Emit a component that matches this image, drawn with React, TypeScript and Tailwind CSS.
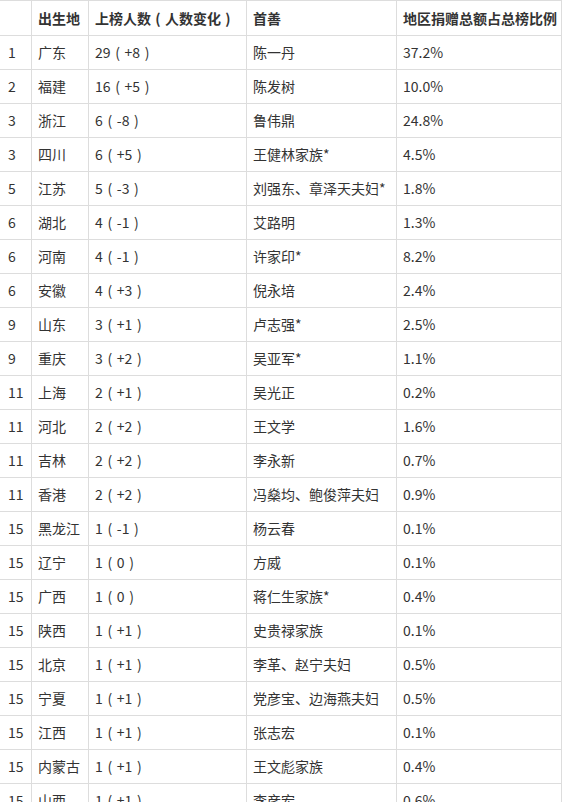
const rows: [string, string, string, string, string][] = [
  ['1', '广东', '29（+8）', '陈一丹', '37.2%'],
  ['2', '福建', '16（+5）', '陈发树', '10.0%'],
  ['3', '浙江', '6（-8）', '鲁伟鼎', '24.8%'],
  ['3', '四川', '6（+5）', '王健林家族*', '4.5%'],
  ['5', '江苏', '5（-3）', '刘强东、章泽天夫妇*', '1.8%'],
  ['6', '湖北', '4（-1）', '艾路明', '1.3%'],
  ['6', '河南', '4（-1）', '许家印*', '8.2%'],
  ['6', '安徽', '4（+3）', '倪永培', '2.4%'],
  ['9', '山东', '3（+1）', '卢志强*', '2.5%'],
  ['9', '重庆', '3（+2）', '吴亚军*', '1.1%'],
  ['11', '上海', '2（+1）', '吴光正', '0.2%'],
  ['11', '河北', '2（+2）', '王文学', '1.6%'],
  ['11', '吉林', '2（+2）', '李永新', '0.7%'],
  ['11', '香港', '2（+2）', '冯燊均、鲍俊萍夫妇', '0.9%'],
  ['15', '黑龙江', '1（-1）', '杨云春', '0.1%'],
  ['15', '辽宁', '1（0）', '方威', '0.1%'],
  ['15', '广西', '1（0）', '蒋仁生家族*', '0.4%'],
  ['15', '陕西', '1（+1）', '史贵禄家族', '0.1%'],
  ['15', '北京', '1（+1）', '李革、赵宁夫妇', '0.5%'],
  ['15', '宁夏', '1（+1）', '党彦宝、边海燕夫妇', '0.5%'],
  ['15', '江西', '1（+1）', '张志宏', '0.1%'],
  ['15', '内蒙古', '1（+1）', '王文彪家族', '0.4%'],
  ['15', '山西', '1（+1）', '李彦宏', '0.6%'],
];

// 列幅（右罫線込み）
const cols = ['w-[32px] pl-[8px]', 'w-[57px] pl-[6px]', 'w-[158px] pl-[6px]', 'w-[150px] pl-[6px]', 'w-[165px] pl-[6px]'];

// 全角括弧を枠の中央に置く
function Text({ s }: { s: string }) {
  const parts = s.split(/([（）])/);
  return (
    <>
      {parts.map((p, i) =>
        p === '（' || p === '）' ? (
          <span key={i} className="inline-block w-[14px] text-center">
            {p === '（' ? '(' : ')'}
          </span>
        ) : (
          <span key={i}>{p}</span>
        )
      )}
    </>
  );
}

function Row({ cells, head }: { cells: string[]; head?: boolean }) {
  return (
    <div className={`flex border-b border-[#dddddd] ${head ? 'h-[35px]' : 'h-[34px]'}`}>
      {cells.map((c, i) => (
        <div
          key={i}
          className={`${cols[i]} shrink-0 flex items-center border-r border-[#dddddd] whitespace-nowrap overflow-hidden ${head ? 'font-bold' : ''}`}
        >
          <Text s={c} />
        </div>
      ))}
    </div>
  );
}

export default function App() {
  return (
    <div
      className="w-[562px] h-[802px] overflow-hidden bg-white text-[14px] text-[#333333]"
      style={{ fontFamily: '"Noto Sans CJK SC", "Noto Sans", sans-serif' }}
    >
      <div className="border-t border-[#dddddd]">
        <Row head cells={['', '出生地', '上榜人数（人数变化）', '首善', '地区捐赠总额占总榜比例']} />
        {rows.map((r, i) => (
          <Row key={i} cells={r} />
        ))}
      </div>
    </div>
  );
}
